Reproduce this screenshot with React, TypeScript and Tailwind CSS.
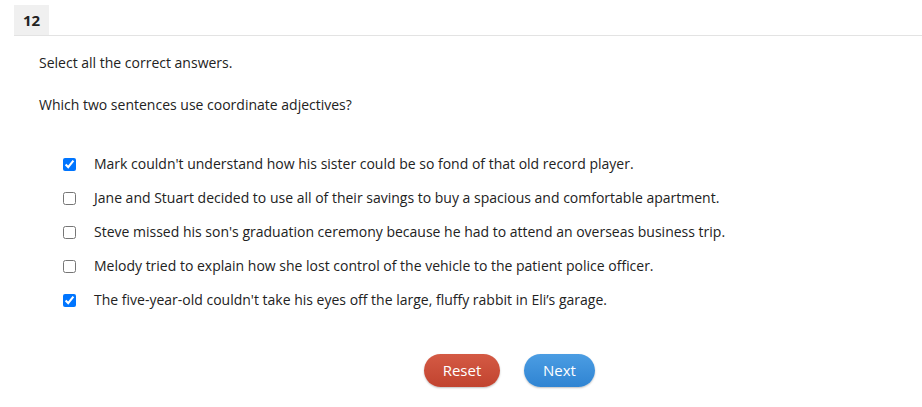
import React, { useState } from "react";

const options = [
  "Mark couldn't understand how his sister could be so fond of that old record player.",
  "Jane and Stuart decided to use all of their savings to buy a spacious and comfortable apartment.",
  "Steve missed his son's graduation ceremony because he had to attend an overseas business trip.",
  "Melody tried to explain how she lost control of the vehicle to the patient police officer.",
  "The five-year-old couldn't take his eyes off the large, fluffy rabbit in Eli’s garage.",
];

export default function App() {
  const [checked, setChecked] = useState<boolean[]>([true, false, false, false, true]);
  return (
    <div className="w-[922px] h-[407px] bg-white text-[#222] overflow-hidden" style={{ fontFamily: '"Open Sans", sans-serif' }}>
      <div className="pt-[5px] pl-[14px]">
        <div className="border-b border-[#e3e3e3] flex">
          <div className="w-[35px] h-[30px] bg-[#f0f0f0] flex items-center justify-center text-[15px] font-bold text-[#222]">12</div>
        </div>
      </div>
      <div className="pl-[39px]">
        <p className="text-[14px] leading-[20px] mt-[17px]">Select all the correct answers.</p>
        <p className="text-[14px] leading-[20px] mt-[22px]">Which two sentences use coordinate adjectives?</p>
      </div>
      <div className="pl-[62px] mt-[39px] flex flex-col gap-[14px]">
        {options.map((o, i) => (
          <label key={i} className="flex items-center h-[20px] text-[14px] leading-[20px] cursor-pointer">
            <input
              type="checkbox"
              checked={checked[i]}
              onChange={() => setChecked(checked.map((c, j) => (j === i ? !c : c)))}
              className="w-[13px] h-[13px] m-0 ml-[1px] accent-[#0075ff]"
            />
            <span className="ml-[18px]">{o}</span>
          </label>
        ))}
      </div>
      <div className="flex justify-center gap-[24px] mt-[44px] pl-[97px]">
        <button className="w-[76px] h-[33px] rounded-full text-white text-[15px] bg-gradient-to-b from-[#d45a44] to-[#c1432f] shadow-[0_1px_2px_rgba(0,0,0,0.25)]" style={{ fontFamily: '"Open Sans", sans-serif' }}>
          Reset
        </button>
        <button className="w-[71px] h-[33px] rounded-full text-white text-[15px] bg-gradient-to-b from-[#4b9de3] to-[#2f84d2] shadow-[0_1px_2px_rgba(0,0,0,0.25)]" style={{ fontFamily: '"Open Sans", sans-serif' }}>
          Next
        </button>
      </div>
    </div>
  );
}
